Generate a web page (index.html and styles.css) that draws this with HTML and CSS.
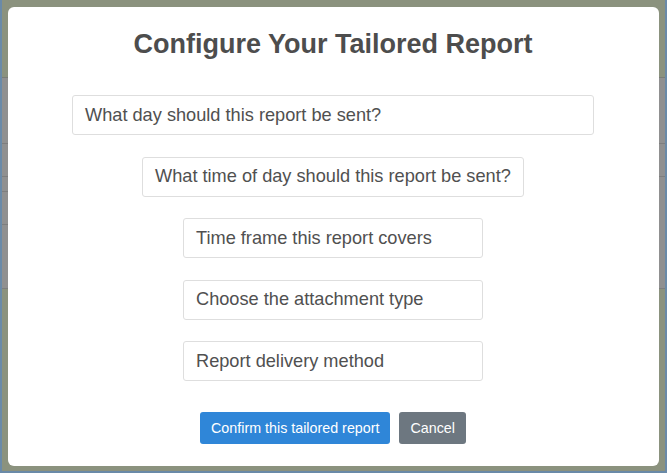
FILE: index.html
```html
<!DOCTYPE html>
<html lang="en">
<head>
<meta charset="utf-8">
<title>Configure Your Tailored Report</title>
<link rel="stylesheet" href="styles.css">
</head>
<body>
<div class="backdrop">
  <div class="band band-top"></div>
  <div class="row row-a"></div>
  <div class="row row-b"></div>
  <div class="row row-c"><div class="partial"></div></div>
  <div class="row row-d"><div class="partial"></div></div>
  <div class="row row-e"></div>
  <div class="band band-bottom"></div>
</div>
<div class="overlay">
  <div class="modal">
    <h2 class="title">Configure Your Tailored Report</h2>
    <div class="fields">
      <div class="field field-wide">What day should this report be sent?</div>
      <div class="field field-mid">What time of day should this report be sent?</div>
      <div class="field field-std">Time frame this report covers</div>
      <div class="field field-std">Choose the attachment type</div>
      <div class="field field-std">Report delivery method</div>
    </div>
    <div class="actions">
      <button class="btn btn-confirm" type="button">Confirm this tailored report</button>
      <button class="btn btn-cancel" type="button">Cancel</button>
    </div>
  </div>
</div>
</body>
</html>
```

FILE: styles.css
```css
html, body {
  margin: 0;
  padding: 0;
  height: 100%;
}
body {
  font-family: "Liberation Sans", Arial, sans-serif;
  overflow: hidden;
}
.backdrop {
  height: 473px;
  box-sizing: border-box;
  border-left: 2px solid #6a8aa8;
  border-right: 2px solid #6a8aa8;
  border-bottom: 2px solid #6a8aa8;
  display: flex;
  flex-direction: column;
  background: #8b927e;
}
.band-top {
  height: 77px;
  background: #8b927e;
  border-bottom: 1px solid #7a7d76;
}
.row {
  background: #909090;
  border-bottom: 1px solid #7e7e7e;
  position: relative;
}
.row-a { height: 65px; }
.row-b { height: 32px; }
.row-c { height: 15px; border-bottom: 0; }
.row-d { height: 33px; border-bottom: 0; }
.row-e { height: 63px; }
.partial {
  height: 100%;
  width: 50%;
  box-sizing: border-box;
  border-bottom: 1px solid #7e7e7e;
}
.band-bottom {
  flex: 1;
  background: #8b927e;
}
.overlay {
  position: fixed;
  inset: 0;
  display: flex;
  align-items: flex-start;
  justify-content: center;
  padding-top: 7px;
}
.modal {
  width: 651px;
  height: 459px;
  margin-left: -1px;
  box-sizing: border-box;
  background: #fff;
  border-radius: 6px;
  display: flex;
  flex-direction: column;
  align-items: center;
  padding-top: 21px;
}
.title {
  margin: 0;
  font-size: 27px;
  line-height: 32px;
  font-weight: bold;
  color: #4d4d4d;
}
.fields {
  margin-top: 35px;
  display: flex;
  flex-direction: column;
  align-items: center;
  gap: 21.5px;
}
.field {
  height: 40px;
  box-sizing: border-box;
  border: 1px solid #dedede;
  border-radius: 3px;
  padding: 0 12px;
  display: flex;
  align-items: center;
  font-size: 18.2px;
  color: #505050;
  white-space: nowrap;
}
.field-wide { width: 522px; }
.field-mid { width: 382px; }
.field-std { width: 300px; }
.actions {
  margin-top: 31px;
  display: flex;
  gap: 9px;
}
.btn {
  height: 32px;
  border: 0;
  border-radius: 3px;
  padding: 0 11px;
  font-family: "Liberation Sans", Arial, sans-serif;
  font-size: 14.3px;
  color: #fff;
}
.btn-confirm { background: #2f86d8; }
.btn-cancel { background: #6d7780; }
```
